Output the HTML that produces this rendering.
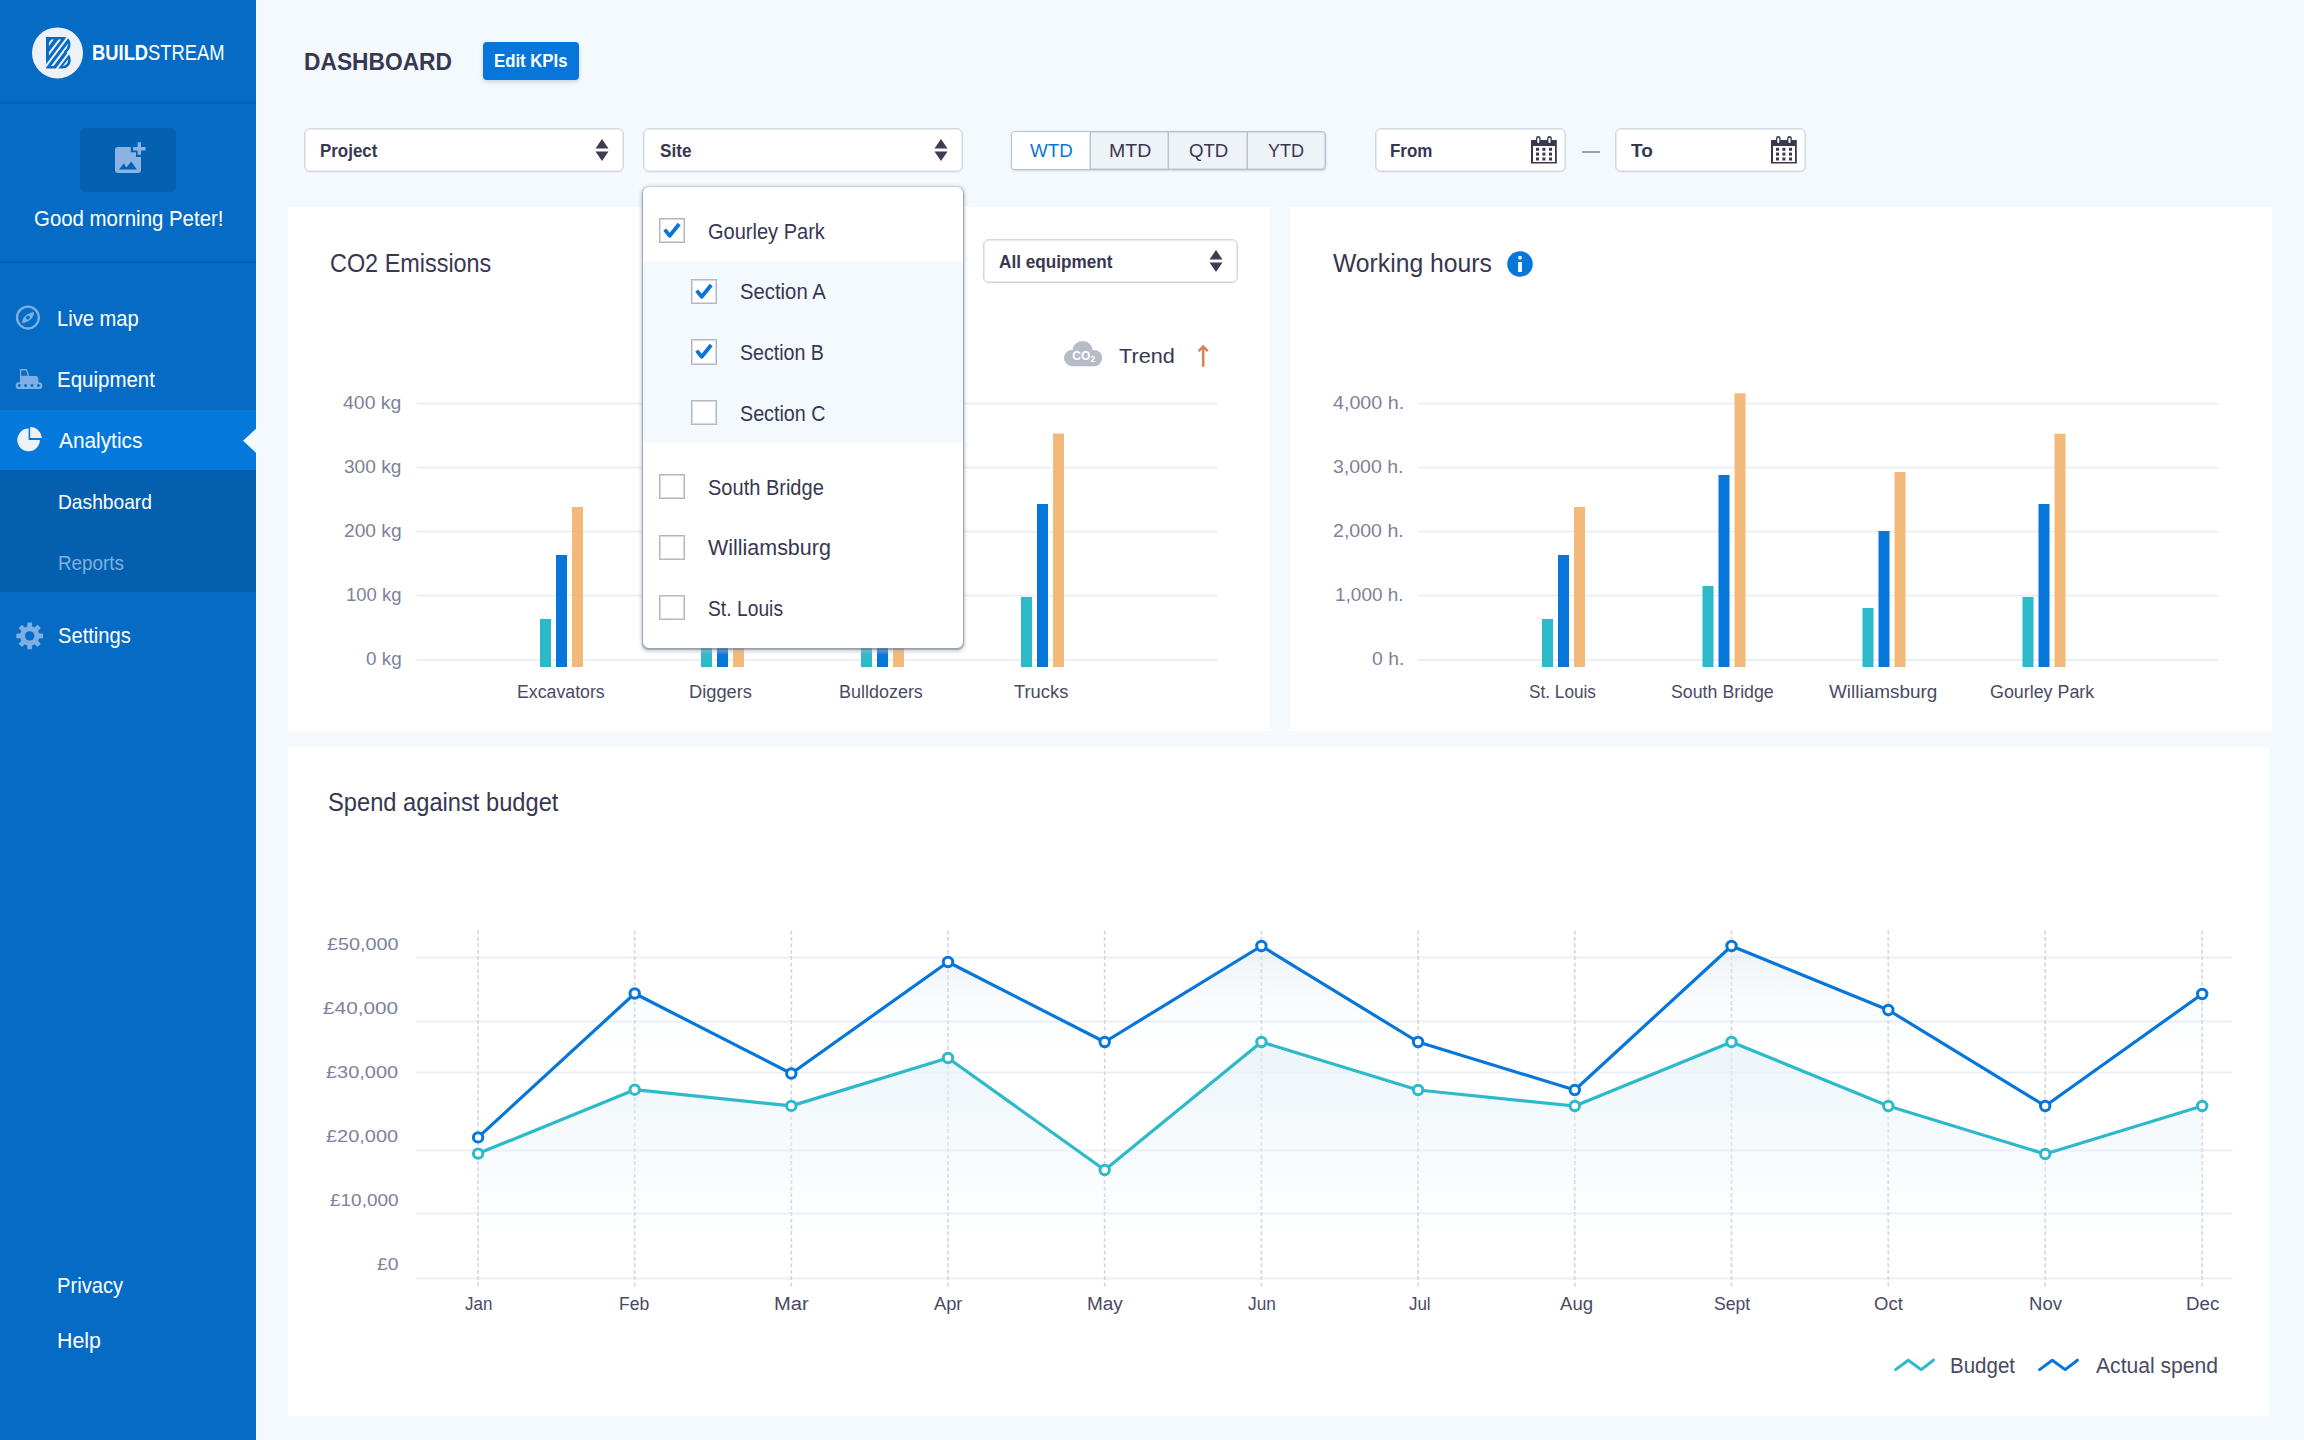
<!DOCTYPE html>
<html lang="en">
<head>
<meta charset="utf-8">
<title>Buildstream – Dashboard</title>
<style>
*{box-sizing:border-box}
html,body{margin:0;padding:0}
body{width:2304px;height:1440px;overflow:hidden;background:#f4f9fd;font-family:"Liberation Sans", sans-serif;position:relative}
.sidebar,.main{position:absolute;top:0;height:1440px}
.sidebar{left:0;width:256px;background:#056bc5}
.main{left:0;width:2304px}
.sidebar div,.main div,.abs,.t{position:absolute}
.abs{display:block;overflow:visible}
.t{white-space:nowrap;display:block;transform-origin:0 50%}
.t span{position:static}
h1,h2,ul,li,header,section{margin:0;padding:0;font:inherit;list-style:none}
.card{background:#fff}
.field{background:#fff;border:1px solid #d2d8df;border-radius:6px;box-shadow:inset 0 0 0 1px rgba(210,216,223,.5),0 1px 1px rgba(60,80,110,.06)}
.seg{background:#eef3f8;border:1px solid #bcc0cc;border-radius:4px;box-shadow:inset 0 0 0 1px rgba(188,192,204,.45),0 1px 2px rgba(60,80,110,.22)}
.dropdown{background:#fff;border-radius:6px;box-shadow:0 0 0 1px rgba(150,156,172,.3),0 1.5px 1.5px .5px rgba(60,62,88,.42),0 1.5px 3px 3px rgba(185,194,208,.4)}
.cb{background:#fff;border:1px solid #b3b6c4;box-shadow:inset 0 0 0 1px rgba(179,182,196,.5)}
</style>
</head>
<body>
<nav class="sidebar"><div style="left:0px;top:102px;width:256px;height:2px;background:#0462b6"></div><div style="left:0px;top:261px;width:256px;height:2px;background:#0462b6"></div><header class="brand"><svg class="abs" style="left:30px;top:25px" width="56" height="56" viewBox="30 25 56 56"><circle cx="57.5" cy="52.9" r="25.5" fill="#eef2f7"/><defs><clipPath id="bi"><path d="M48.9 39.6 H63.6 C66.4 39.6 67.8 42 67.8 44.6 C67.8 47.6 66.4 49.8 63.8 51.4 L65 52.8 C67 54.3 68 57 68 60 C68 63.6 65.6 66 62 66 H48.9 Z"/></clipPath></defs><path d="M46 37 H64 C68.6 37 70.5 40.8 70.5 44.6 C70.5 48 68.8 50.6 66.6 52.3 C69 53.8 70.7 56.8 70.7 60 C70.7 65 67 68.5 62 68.5 H46 Z" fill="#056bc5"/><g clip-path="url(#bi)" stroke="#eef2f7" fill="none"><path d="M30.40 68.82 L66.51 20.90" stroke-width="2.0"/><path d="M35.03 72.31 L71.14 24.39" stroke-width="2.1"/><path d="M43.02 78.33 L79.13 30.41" stroke-width="2.1"/><path d="M50.61 84.05 L86.71 36.13" stroke-width="2.2"/></g><g stroke="#eef2f7" fill="none"><path d="M44.36 68.07 L69.64 34.53" stroke-width="2.0"/><path d="M55.68 70.34 L74.93 44.78" stroke-width="2.0"/></g></svg><span class="t" style="left:91.95px;top:40px;font-size:22px;line-height:26px;color:#ffffff;transform:scaleX(0.8348);"><b>BUILD</b><span style="font-weight:400">STREAM</span></span></header><section class="profile"><div style="left:80px;top:128px;width:96px;height:64px;background:#0460b1;border-radius:6px"></div><svg class="abs" style="left:112px;top:140px" width="36" height="36" viewBox="112 140 36 36">
<path fill="#8ab3e3" d="M118 147 H130.8 V152.2 H136 V157 H141 V170 a3 3 0 0 1 -3 3 H118 a3 3 0 0 1 -3 -3 V150 a3 3 0 0 1 3 -3 Z M119 169.5 H136.9 L131.2 161.5 L126.4 167.5 L123.8 163.4 Z" fill-rule="evenodd"/>
<path fill="#8ab3e3" d="M137.6 142.2 h3.4 v4.9 h4.6 v3.3 h-4.6 v4.4 h-3.4 v-4.4 h-4.5 v-3.3 h4.5 Z"/>
</svg><span class="t" style="left:33.82px;top:206px;font-size:22px;line-height:26px;color:#ffffff;transform:scaleX(0.9277);">Good morning Peter!</span></section><ul class="menu"><div style="left:0px;top:410px;width:256px;height:60px;background:#0578dc"></div><div style="left:0px;top:470px;width:256px;height:122px;background:#0460af"></div><svg class="abs" style="left:240px;top:426px" width="16" height="30" viewBox="240 426 16 30"><path d="M256 428.8 L243 440.8 L256 452.8 Z" fill="#f4f9fd"/></svg><svg class="abs" style="left:12px;top:300px" width="36" height="36" viewBox="12 300 36 36">
<circle cx="27.9" cy="317.6" r="10.9" fill="none" stroke="#7dafe2" stroke-width="2.3"/>
<path fill="#7dafe2" fill-rule="evenodd" d="M34 312 C33.6 317.6 31.2 321.2 22 323.3 C22.6 317.4 25.2 313.9 34 312 Z M27.95 315.7 a1.9 1.9 0 1 0 0.01 0 Z"/>
</svg><svg class="abs" style="left:12px;top:364px" width="36" height="30" viewBox="12 364 36 30">
<path fill="#7dafe2" fill-rule="evenodd" d="M19.9 368.9 H26.9 L29.3 376.1 H36.6 L38.3 377.8 V382.3 H39 a3.3 3.3 0 0 1 0 6.7 H19 a3.3 3.3 0 0 1 0 -6.7 H19.9 Z
M21.2 370.4 V375.8 H27.9 L26 370.4 Z
M19.3 384 a1.5 1.5 0 1 0 0.01 0 Z M25.6 384 a1.5 1.5 0 1 0 0.01 0 Z M31.9 384 a1.5 1.5 0 1 0 0.01 0 Z M38.4 384 a1.5 1.5 0 1 0 0.01 0 Z"/>
</svg><svg class="abs" style="left:14px;top:424px" width="32" height="32" viewBox="14 424 32 32">
<path fill="#eef2f7" d="M28.6 428.6 A11.3 11.3 0 1 0 39.9 439.9 H28.6 Z"/>
<path fill="#eef2f7" d="M30.2 427.1 A11.4 11.4 0 0 1 41.7 438.1 H30.2 Z"/>
</svg><svg class="abs" style="left:12px;top:618px" width="36" height="36" viewBox="12 618 36 36"><circle cx="29.7" cy="635.9" r="9.6" fill="#7dafe2"/><path fill="#7dafe2" fill-rule="evenodd" d="M27.10 626.97 L27.45 622.49 L31.95 622.49 L32.30 626.97 L34.18 627.75 L37.59 624.82 L40.78 628.01 L37.85 631.42 L38.63 633.30 L43.11 633.65 L43.11 638.15 L38.63 638.50 L37.85 640.38 L40.78 643.79 L37.59 646.98 L34.18 644.05 L32.30 644.83 L31.95 649.31 L27.45 649.31 L27.10 644.83 L25.22 644.05 L21.81 646.98 L18.62 643.79 L21.55 640.38 L20.77 638.50 L16.29 638.15 L16.29 633.65 L20.77 633.30 L21.55 631.42 L18.62 628.01 L21.81 624.82 L25.22 627.75 Z M25.00 635.90 a4.7 4.7 0 1 0 9.4 0 a4.7 4.7 0 1 0 -9.4 0 Z"/><circle cx="29.7" cy="635.9" r="4.7" fill="#056bc5"/></svg><li class="t" style="left:57.46px;top:306px;font-size:21.5px;line-height:26px;color:#ffffff;transform:scaleX(0.9373);">Live map</li><li class="t" style="left:57.43px;top:367px;font-size:21.5px;line-height:26px;color:#ffffff;transform:scaleX(0.9525);">Equipment</li><li class="t" style="left:59.10px;top:428px;font-size:21.5px;line-height:26px;color:#ffffff;transform:scaleX(0.9689);">Analytics</li><li class="t" style="left:57.50px;top:489px;font-size:21px;line-height:25px;color:#ffffff;transform:scaleX(0.9143);">Dashboard</li><li class="t" style="left:57.53px;top:550px;font-size:21px;line-height:25px;color:#7fb0e0;transform:scaleX(0.8972);">Reports</li><li class="t" style="left:58.16px;top:623px;font-size:21.5px;line-height:26px;color:#ffffff;transform:scaleX(0.9368);">Settings</li></ul><ul class="meta"><li class="t" style="left:57.16px;top:1273px;font-size:21.5px;line-height:26px;color:#ffffff;transform:scaleX(0.9372);">Privacy</li><li class="t" style="left:57.06px;top:1328px;font-size:21.5px;line-height:26px;color:#ffffff;transform:scaleX(0.9928);">Help</li></ul></nav>
<main class="main"><header class="page-head"><h1 class="t" style="left:303.77px;top:47px;font-size:24.5px;line-height:29px;color:#383751;font-weight:700;transform:scaleX(0.9291);">DASHBOARD</h1><div class="btn" style="left:483px;top:42px;width:96px;height:38px;background:#0676db;border-radius:4px;box-shadow:0 2px 4px rgba(20,40,80,.18)"></div><span class="t" style="left:494.44px;top:50px;font-size:18px;line-height:22px;color:#ffffff;font-weight:700;transform:scaleX(0.9299);">Edit KPIs</span></header><section class="filters"><div class="field" style="left:304px;top:128px;width:320px;height:44px;"></div><span class="t" style="left:319.89px;top:139px;font-size:19px;line-height:23px;color:#383751;font-weight:700;transform:scaleX(0.8905);">Project</span><svg class="abs" style="left:593.6px;top:137.35px" width="16" height="26" viewBox="-8 -13 16 26"><path fill="#3f3c53" d="M0 -10.95 L6.5 -1.5 H-6.5 Z M0 10.95 L6.5 1.55 H-6.5 Z"/></svg><div class="field" style="left:643px;top:128px;width:320px;height:44px;"></div><span class="t" style="left:659.55px;top:139px;font-size:19px;line-height:23px;color:#383751;font-weight:700;transform:scaleX(0.9067);">Site</span><svg class="abs" style="left:932.7px;top:137.35px" width="16" height="26" viewBox="-8 -13 16 26"><path fill="#3f3c53" d="M0 -10.95 L6.5 -1.5 H-6.5 Z M0 10.95 L6.5 1.55 H-6.5 Z"/></svg><div class="seg" style="left:1011px;top:131px;width:315px;height:38.5px;"></div><div style="left:1012px;top:132px;width:78px;height:36.5px;background:#fff;border-radius:3px 0 0 3px"></div><div style="left:1090px;top:132px;width:1px;height:36.5px;background:#bcc0cc;box-shadow:-1px 0 0 rgba(188,192,204,.45)"></div><div style="left:1168px;top:132px;width:1px;height:36.5px;background:#bcc0cc;box-shadow:-1px 0 0 rgba(188,192,204,.45)"></div><div style="left:1247px;top:132px;width:1px;height:36.5px;background:#bcc0cc;box-shadow:-1px 0 0 rgba(188,192,204,.45)"></div><span class="t" style="left:1030.10px;top:139px;font-size:19px;line-height:23px;color:#0676db;transform:scaleX(0.9870);">WTD</span><span class="t" style="left:1109.06px;top:139px;font-size:19px;line-height:23px;color:#383751;transform:scaleX(1.0271);">MTD</span><span class="t" style="left:1188.97px;top:139px;font-size:19px;line-height:23px;color:#383751;transform:scaleX(0.9804);">QTD</span><span class="t" style="left:1268.37px;top:139px;font-size:19px;line-height:23px;color:#383751;transform:scaleX(0.9507);">YTD</span><div class="field" style="left:1375px;top:128px;width:191px;height:44px;"></div><span class="t" style="left:1390.38px;top:139px;font-size:19px;line-height:23px;color:#383751;font-weight:700;transform:scaleX(0.8933);">From</span><svg class="abs" style="left:1529px;top:134.2px" width="30" height="32" viewBox="-2 -6 30 32"><path fill="#3a3850" fill-rule="evenodd" d="M0 0 H25.8 V23.6 H0 Z M2 5.9 V22 H24 V5.9 Z"/><rect x="5.0" y="-4" width="4.6" height="8" rx="2.3" fill="#3a3850"/><rect x="6.3" y="-2.3" width="2" height="5.4" rx="1" fill="#fff"/><rect x="16.2" y="-4" width="4.6" height="8" rx="2.3" fill="#3a3850"/><rect x="17.5" y="-2.3" width="2" height="5.4" rx="1" fill="#fff"/><rect x="5.0" y="7.800000000000001" width="3" height="3" fill="#3a3850"/><rect x="5.0" y="12.6" width="3" height="3" fill="#3a3850"/><rect x="5.0" y="17.5" width="3" height="3" fill="#3a3850"/><rect x="11.4" y="7.800000000000001" width="3" height="3" fill="#3a3850"/><rect x="11.4" y="12.6" width="3" height="3" fill="#3a3850"/><rect x="11.4" y="17.5" width="3" height="3" fill="#3a3850"/><rect x="18.0" y="7.800000000000001" width="3" height="3" fill="#3a3850"/><rect x="18.0" y="12.6" width="3" height="3" fill="#3a3850"/><rect x="18.0" y="17.5" width="3" height="3" fill="#3a3850"/></svg><div style="left:1582px;top:150.5px;width:18px;height:2px;background:#9d9fae"></div><div class="field" style="left:1615px;top:128px;width:191px;height:44px;"></div><span class="t" style="left:1630.95px;top:139px;font-size:19px;line-height:23px;color:#383751;font-weight:700;transform:scaleX(1.0024);">To</span><svg class="abs" style="left:1769px;top:134.2px" width="30" height="32" viewBox="-2 -6 30 32"><path fill="#3a3850" fill-rule="evenodd" d="M0 0 H25.8 V23.6 H0 Z M2 5.9 V22 H24 V5.9 Z"/><rect x="5.0" y="-4" width="4.6" height="8" rx="2.3" fill="#3a3850"/><rect x="6.3" y="-2.3" width="2" height="5.4" rx="1" fill="#fff"/><rect x="16.2" y="-4" width="4.6" height="8" rx="2.3" fill="#3a3850"/><rect x="17.5" y="-2.3" width="2" height="5.4" rx="1" fill="#fff"/><rect x="5.0" y="7.800000000000001" width="3" height="3" fill="#3a3850"/><rect x="5.0" y="12.6" width="3" height="3" fill="#3a3850"/><rect x="5.0" y="17.5" width="3" height="3" fill="#3a3850"/><rect x="11.4" y="7.800000000000001" width="3" height="3" fill="#3a3850"/><rect x="11.4" y="12.6" width="3" height="3" fill="#3a3850"/><rect x="11.4" y="17.5" width="3" height="3" fill="#3a3850"/><rect x="18.0" y="7.800000000000001" width="3" height="3" fill="#3a3850"/><rect x="18.0" y="12.6" width="3" height="3" fill="#3a3850"/><rect x="18.0" y="17.5" width="3" height="3" fill="#3a3850"/></svg></section><section class="cards"><div class="card" style="left:288px;top:207px;width:982px;height:524px;"></div><div class="card" style="left:1290px;top:207px;width:982px;height:524px;"></div><div class="card" style="left:288px;top:747px;width:1981px;height:669px;"></div><h2 class="t" style="left:329.83px;top:248px;font-size:25px;line-height:30px;color:#383751;transform:scaleX(0.9365);">CO2 Emissions</h2><h2 class="t" style="left:1332.75px;top:248px;font-size:25px;line-height:30px;color:#383751;transform:scaleX(0.9881);">Working hours</h2><h2 class="t" style="left:328.12px;top:787px;font-size:25px;line-height:30px;color:#383751;transform:scaleX(0.9473);">Spend against budget</h2><svg class="abs" style="left:1505px;top:249px" width="30" height="30" viewBox="1505 249 30 30">
<circle cx="1520" cy="264" r="12.8" fill="#0676db"/>
<circle cx="1520" cy="257.7" r="1.85" fill="#fff"/>
<rect x="1518.1" y="262" width="3.8" height="10" fill="#fff"/>
</svg><div class="field" style="left:983px;top:239px;width:255px;height:44px;"></div><span class="t" style="left:999.05px;top:250px;font-size:19px;line-height:23px;color:#383751;font-weight:700;transform:scaleX(0.9024);">All equipment</span><svg class="abs" style="left:1208.2px;top:247.8px" width="16" height="26" viewBox="-8 -13 16 26"><path fill="#3f3c53" d="M0 -10.95 L6.5 -1.5 H-6.5 Z M0 10.95 L6.5 1.55 H-6.5 Z"/></svg><svg class="abs" style="left:1060px;top:338px" width="46" height="32" viewBox="1060 338 46 32">
<g fill="#b7bbc7"><circle cx="1072.3" cy="358" r="8.3"/><circle cx="1082.6" cy="351.3" r="10.3"/><circle cx="1094" cy="358.1" r="8.2"/><rect x="1072.3" y="352" width="21.7" height="14.3"/></g>
<text x="1072.3" y="360.2" font-family="Liberation Sans, sans-serif" font-size="12.4" font-weight="700" fill="#fff" textLength="18" lengthAdjust="spacingAndGlyphs">CO</text>
<text x="1090.4" y="362.4" font-family="Liberation Sans, sans-serif" font-size="8.6" font-weight="700" fill="#fff">2</text>
</svg><span class="t" style="left:1119.18px;top:343px;font-size:21px;line-height:25px;color:#383751;transform:scaleX(1.0316);">Trend</span><svg class="abs" style="left:1194px;top:341px" width="20" height="30" viewBox="1194 341 20 30">
<path d="M1203.2 347 V366.7 M1198.6 351.2 L1203.2 346.6 L1207.8 351.2" fill="none" stroke="#d8835a" stroke-width="2.6" stroke-linejoin="miter"/>
</svg><svg class="abs" style="left:256px;top:0" width="2048" height="1440" viewBox="256 0 2048 1440"><rect x="416.5" y="402.70000000000005" width="801" height="1.8" fill="#e8eef5"/><rect x="1418" y="402.70000000000005" width="801" height="1.8" fill="#e8eef5"/><rect x="416.5" y="466.70000000000005" width="801" height="1.8" fill="#e8eef5"/><rect x="1418" y="466.70000000000005" width="801" height="1.8" fill="#e8eef5"/><rect x="416.5" y="530.7" width="801" height="1.8" fill="#e8eef5"/><rect x="1418" y="530.7" width="801" height="1.8" fill="#e8eef5"/><rect x="416.5" y="594.7" width="801" height="1.8" fill="#e8eef5"/><rect x="1418" y="594.7" width="801" height="1.8" fill="#e8eef5"/><rect x="416.5" y="659.0" width="801" height="1.8" fill="#e8eef5"/><rect x="1418" y="659.0" width="801" height="1.8" fill="#e8eef5"/><rect x="540" y="619" width="11" height="48" fill="#2cb9c9"/><rect x="556" y="555" width="11" height="112" fill="#0676db"/><rect x="572" y="507" width="11" height="160" fill="#f3b97a"/><rect x="701" y="586" width="11" height="81" fill="#2cb9c9"/><rect x="717" y="475" width="11" height="192" fill="#0676db"/><rect x="733" y="393" width="11" height="274" fill="#f3b97a"/><rect x="861" y="608" width="11" height="59" fill="#2cb9c9"/><rect x="877" y="531" width="11" height="136" fill="#0676db"/><rect x="893" y="472" width="11" height="195" fill="#f3b97a"/><rect x="1021" y="597" width="11" height="70" fill="#2cb9c9"/><rect x="1037" y="504" width="11" height="163" fill="#0676db"/><rect x="1053" y="433.5" width="11" height="233.5" fill="#f3b97a"/><rect x="1542" y="619" width="11" height="48" fill="#2cb9c9"/><rect x="1558" y="555" width="11" height="112" fill="#0676db"/><rect x="1574" y="507" width="11" height="160" fill="#f3b97a"/><rect x="1702.5" y="586" width="11" height="81" fill="#2cb9c9"/><rect x="1718.5" y="475" width="11" height="192" fill="#0676db"/><rect x="1734.5" y="393.3" width="11" height="273.7" fill="#f3b97a"/><rect x="1862.5" y="608" width="11" height="59" fill="#2cb9c9"/><rect x="1878.5" y="531" width="11" height="136" fill="#0676db"/><rect x="1894.5" y="472" width="11" height="195" fill="#f3b97a"/><rect x="2022.5" y="597" width="11" height="70" fill="#2cb9c9"/><rect x="2038.5" y="504" width="11" height="163" fill="#0676db"/><rect x="2054.5" y="433.8" width="11" height="233.2" fill="#f3b97a"/><defs><linearGradient id="g1" gradientUnits="userSpaceOnUse" x1="0" y1="946" x2="0" y2="1060"><stop offset="0" stop-color="#dde8f0" stop-opacity=".55"/><stop offset=".45" stop-color="#e6eff5" stop-opacity=".26"/><stop offset="1" stop-color="#edf4f9" stop-opacity="0"/></linearGradient><linearGradient id="g2" gradientUnits="userSpaceOnUse" x1="0" y1="1042" x2="0" y2="1250"><stop offset="0" stop-color="#e4f0f7" stop-opacity=".7"/><stop offset=".5" stop-color="#eaf3f9" stop-opacity=".42"/><stop offset="1" stop-color="#f0f7fb" stop-opacity="0"/></linearGradient></defs><rect x="416" y="956.6" width="1816" height="1.8" fill="#e8eef5"/><rect x="416" y="1020.6" width="1816" height="1.8" fill="#e8eef5"/><rect x="416" y="1071.6" width="1816" height="1.8" fill="#e8eef5"/><rect x="416" y="1149.6" width="1816" height="1.8" fill="#e8eef5"/><rect x="416" y="1212.6" width="1816" height="1.8" fill="#e8eef5"/><rect x="416" y="1277.6" width="1816" height="1.8" fill="#e8eef5"/><path d="M478.1 930.5 V1287" stroke="#d5dae3" stroke-width="1.8" stroke-dasharray="4 2.4" fill="none"/><path d="M634.7 930.5 V1287" stroke="#d5dae3" stroke-width="1.8" stroke-dasharray="4 2.4" fill="none"/><path d="M791.3 930.5 V1287" stroke="#d5dae3" stroke-width="1.8" stroke-dasharray="4 2.4" fill="none"/><path d="M948 930.5 V1287" stroke="#d5dae3" stroke-width="1.8" stroke-dasharray="4 2.4" fill="none"/><path d="M1104.7 930.5 V1287" stroke="#d5dae3" stroke-width="1.8" stroke-dasharray="4 2.4" fill="none"/><path d="M1261.4 930.5 V1287" stroke="#d5dae3" stroke-width="1.8" stroke-dasharray="4 2.4" fill="none"/><path d="M1418.1 930.5 V1287" stroke="#d5dae3" stroke-width="1.8" stroke-dasharray="4 2.4" fill="none"/><path d="M1574.8 930.5 V1287" stroke="#d5dae3" stroke-width="1.8" stroke-dasharray="4 2.4" fill="none"/><path d="M1731.5 930.5 V1287" stroke="#d5dae3" stroke-width="1.8" stroke-dasharray="4 2.4" fill="none"/><path d="M1888.3 930.5 V1287" stroke="#d5dae3" stroke-width="1.8" stroke-dasharray="4 2.4" fill="none"/><path d="M2045.2 930.5 V1287" stroke="#d5dae3" stroke-width="1.8" stroke-dasharray="4 2.4" fill="none"/><path d="M2202.2 930.5 V1287" stroke="#d5dae3" stroke-width="1.8" stroke-dasharray="4 2.4" fill="none"/><polygon points="478.1,1137.4 634.7,993.5 791.3,1073.5 948,962 1104.7,1042 1261.4,946 1418.1,1042 1574.8,1090 1731.5,946 1888.3,1010 2045.2,1106 2202.2,994 2202.2,1262 478.1,1262" fill="url(#g1)"/><polygon points="478.1,1153.6 634.7,1089.7 791.3,1105.9 948,1058 1104.7,1170 1261.4,1042 1418.1,1090 1574.8,1106 1731.5,1042 1888.3,1106 2045.2,1154 2202.2,1106 2202.2,1262 478.1,1262" fill="url(#g2)"/><polyline points="478.1,1153.6 634.7,1089.7 791.3,1105.9 948,1058 1104.7,1170 1261.4,1042 1418.1,1090 1574.8,1106 1731.5,1042 1888.3,1106 2045.2,1154 2202.2,1106" fill="none" stroke="#2cb9c9" stroke-width="3.2" stroke-linejoin="round"/><polyline points="478.1,1137.4 634.7,993.5 791.3,1073.5 948,962 1104.7,1042 1261.4,946 1418.1,1042 1574.8,1090 1731.5,946 1888.3,1010 2045.2,1106 2202.2,994" fill="none" stroke="#0676db" stroke-width="3.2" stroke-linejoin="round"/><circle cx="478.1" cy="1153.6" r="4.7" fill="#fff" stroke="#2cb9c9" stroke-width="3"/><circle cx="634.7" cy="1089.7" r="4.7" fill="#fff" stroke="#2cb9c9" stroke-width="3"/><circle cx="791.3" cy="1105.9" r="4.7" fill="#fff" stroke="#2cb9c9" stroke-width="3"/><circle cx="948" cy="1058" r="4.7" fill="#fff" stroke="#2cb9c9" stroke-width="3"/><circle cx="1104.7" cy="1170" r="4.7" fill="#fff" stroke="#2cb9c9" stroke-width="3"/><circle cx="1261.4" cy="1042" r="4.7" fill="#fff" stroke="#2cb9c9" stroke-width="3"/><circle cx="1418.1" cy="1090" r="4.7" fill="#fff" stroke="#2cb9c9" stroke-width="3"/><circle cx="1574.8" cy="1106" r="4.7" fill="#fff" stroke="#2cb9c9" stroke-width="3"/><circle cx="1731.5" cy="1042" r="4.7" fill="#fff" stroke="#2cb9c9" stroke-width="3"/><circle cx="1888.3" cy="1106" r="4.7" fill="#fff" stroke="#2cb9c9" stroke-width="3"/><circle cx="2045.2" cy="1154" r="4.7" fill="#fff" stroke="#2cb9c9" stroke-width="3"/><circle cx="2202.2" cy="1106" r="4.7" fill="#fff" stroke="#2cb9c9" stroke-width="3"/><circle cx="478.1" cy="1137.4" r="4.7" fill="#fff" stroke="#0676db" stroke-width="3"/><circle cx="634.7" cy="993.5" r="4.7" fill="#fff" stroke="#0676db" stroke-width="3"/><circle cx="791.3" cy="1073.5" r="4.7" fill="#fff" stroke="#0676db" stroke-width="3"/><circle cx="948" cy="962" r="4.7" fill="#fff" stroke="#0676db" stroke-width="3"/><circle cx="1104.7" cy="1042" r="4.7" fill="#fff" stroke="#0676db" stroke-width="3"/><circle cx="1261.4" cy="946" r="4.7" fill="#fff" stroke="#0676db" stroke-width="3"/><circle cx="1418.1" cy="1042" r="4.7" fill="#fff" stroke="#0676db" stroke-width="3"/><circle cx="1574.8" cy="1090" r="4.7" fill="#fff" stroke="#0676db" stroke-width="3"/><circle cx="1731.5" cy="946" r="4.7" fill="#fff" stroke="#0676db" stroke-width="3"/><circle cx="1888.3" cy="1010" r="4.7" fill="#fff" stroke="#0676db" stroke-width="3"/><circle cx="2045.2" cy="1106" r="4.7" fill="#fff" stroke="#0676db" stroke-width="3"/><circle cx="2202.2" cy="994" r="4.7" fill="#fff" stroke="#0676db" stroke-width="3"/><path d="M1895.6 1369.6 L1908.3 1360.2 L1921.2 1369.6 L1933.4 1360.2" fill="none" stroke="#2cb9c9" stroke-width="3" stroke-linecap="round" stroke-linejoin="round"/><path d="M2039.6 1369.6 L2052.3 1360.2 L2065.2 1369.6 L2077.4 1360.2" fill="none" stroke="#0676db" stroke-width="3" stroke-linecap="round" stroke-linejoin="round"/></svg><span class="t" style="left:343.27px;top:392px;font-size:18.5px;line-height:22px;color:#7d8298;transform:scaleX(1.0512);">400 kg</span><span class="t" style="left:344.33px;top:456px;font-size:18.5px;line-height:22px;color:#7d8298;transform:scaleX(1.0318);">300 kg</span><span class="t" style="left:344.06px;top:520px;font-size:18.5px;line-height:22px;color:#7d8298;transform:scaleX(1.0366);">200 kg</span><span class="t" style="left:346.00px;top:584px;font-size:18.5px;line-height:22px;color:#7d8298;">100 kg</span><span class="t" style="left:365.94px;top:648px;font-size:18.5px;line-height:22px;color:#7d8298;transform:scaleX(1.0182);">0 kg</span><span class="t" style="left:516.87px;top:681px;font-size:18px;line-height:22px;color:#4a4a63;transform:scaleX(0.9851);">Excavators</span><span class="t" style="left:688.83px;top:681px;font-size:18px;line-height:22px;color:#4a4a63;transform:scaleX(1.0159);">Diggers</span><span class="t" style="left:838.50px;top:681px;font-size:18px;line-height:22px;color:#4a4a63;transform:scaleX(0.9976);">Bulldozers</span><span class="t" style="left:1013.79px;top:681px;font-size:18px;line-height:22px;color:#4a4a63;transform:scaleX(1.0182);">Trucks</span><span class="t" style="left:1332.67px;top:392px;font-size:18.5px;line-height:22px;color:#7d8298;transform:scaleX(1.0641);">4,000 h.</span><span class="t" style="left:1333.31px;top:456px;font-size:18.5px;line-height:22px;color:#7d8298;transform:scaleX(1.0543);">3,000 h.</span><span class="t" style="left:1333.04px;top:520px;font-size:18.5px;line-height:22px;color:#7d8298;transform:scaleX(1.0584);">2,000 h.</span><span class="t" style="left:1335.16px;top:584px;font-size:18.5px;line-height:22px;color:#7d8298;transform:scaleX(1.0259);">1,000 h.</span><span class="t" style="left:1371.52px;top:648px;font-size:18.5px;line-height:22px;color:#7d8298;transform:scaleX(1.0456);">0 h.</span><span class="t" style="left:1528.83px;top:681px;font-size:18px;line-height:22px;color:#4a4a63;transform:scaleX(0.9556);">St. Louis</span><span class="t" style="left:1670.86px;top:681px;font-size:18px;line-height:22px;color:#4a4a63;transform:scaleX(0.9873);">South Bridge</span><span class="t" style="left:1829.29px;top:681px;font-size:18px;line-height:22px;color:#4a4a63;transform:scaleX(1.0512);">Williamsburg</span><span class="t" style="left:1989.61px;top:681px;font-size:18px;line-height:22px;color:#4a4a63;transform:scaleX(0.9923);">Gourley Park</span><span class="t" style="left:326.82px;top:935px;font-size:17px;line-height:20px;color:#7d8298;transform:scaleX(1.1651);">£50,000</span><span class="t" style="left:323.29px;top:999px;font-size:17px;line-height:20px;color:#7d8298;transform:scaleX(1.2232);">£40,000</span><span class="t" style="left:326.31px;top:1063px;font-size:17px;line-height:20px;color:#7d8298;transform:scaleX(1.1734);">£30,000</span><span class="t" style="left:326.31px;top:1127px;font-size:17px;line-height:20px;color:#7d8298;transform:scaleX(1.1734);">£20,000</span><span class="t" style="left:329.84px;top:1191px;font-size:17px;line-height:20px;color:#7d8298;transform:scaleX(1.1154);">£10,000</span><span class="t" style="left:376.83px;top:1255px;font-size:17px;line-height:20px;color:#7d8298;transform:scaleX(1.1380);">£0</span><span class="t" style="left:464.86px;top:1293px;font-size:18px;line-height:22px;color:#4a4a63;transform:scaleX(0.9418);">Jan</span><span class="t" style="left:619.34px;top:1293px;font-size:18px;line-height:22px;color:#4a4a63;transform:scaleX(0.9739);">Feb</span><span class="t" style="left:773.77px;top:1293px;font-size:18px;line-height:22px;color:#4a4a63;transform:scaleX(1.1179);">Mar</span><span class="t" style="left:934.15px;top:1293px;font-size:18px;line-height:22px;color:#4a4a63;transform:scaleX(1.0162);">Apr</span><span class="t" style="left:1086.77px;top:1293px;font-size:18px;line-height:22px;color:#4a4a63;transform:scaleX(1.0523);">May</span><span class="t" style="left:1248.26px;top:1293px;font-size:18px;line-height:22px;color:#4a4a63;transform:scaleX(0.9600);">Jun</span><span class="t" style="left:1408.92px;top:1293px;font-size:18px;line-height:22px;color:#4a4a63;transform:scaleX(0.9395);">Jul</span><span class="t" style="left:1559.90px;top:1293px;font-size:18px;line-height:22px;color:#4a4a63;transform:scaleX(1.0309);">Aug</span><span class="t" style="left:1713.77px;top:1293px;font-size:18px;line-height:22px;color:#4a4a63;transform:scaleX(0.9793);">Sept</span><span class="t" style="left:1874.23px;top:1293px;font-size:18px;line-height:22px;color:#4a4a63;transform:scaleX(1.0275);">Oct</span><span class="t" style="left:2028.96px;top:1293px;font-size:18px;line-height:22px;color:#4a4a63;transform:scaleX(1.0295);">Nov</span><span class="t" style="left:2185.84px;top:1293px;font-size:18px;line-height:22px;color:#4a4a63;transform:scaleX(1.0400);">Dec</span><span class="t" style="left:1950.23px;top:1353px;font-size:21.5px;line-height:26px;color:#4a4a63;transform:scaleX(0.9540);">Budget</span><span class="t" style="left:2096.10px;top:1353px;font-size:21.5px;line-height:26px;color:#4a4a63;transform:scaleX(0.9821);">Actual spend</span></section><ul class="site-options"><div class="dropdown" style="left:643px;top:187px;width:320px;height:461px;"></div><div style="left:643px;top:261px;width:320px;height:182px;background:#f4f9fd"></div><li><div class="cb" style="left:659.4px;top:217.8px;width:25.4px;height:25.2px;"><svg class="abs" style="left:0;top:0" width="25" height="25" viewBox="0 0 25 25"><path d="M4.7 10.6 L9.7 16.8 L19.2 5" fill="none" stroke="#0676db" stroke-width="3.8" stroke-linecap="butt" stroke-linejoin="round"/></svg></div><span class="t" style="left:707.69px;top:219px;font-size:22px;line-height:26px;color:#383751;transform:scaleX(0.9100);">Gourley Park</span></li><li><div class="cb" style="left:691.4px;top:278.6px;width:25.4px;height:25.2px;"><svg class="abs" style="left:0;top:0" width="25" height="25" viewBox="0 0 25 25"><path d="M4.7 10.6 L9.7 16.8 L19.2 5" fill="none" stroke="#0676db" stroke-width="3.8" stroke-linecap="butt" stroke-linejoin="round"/></svg></div><span class="t" style="left:739.68px;top:279px;font-size:22px;line-height:26px;color:#383751;transform:scaleX(0.9221);">Section A</span></li><li><div class="cb" style="left:691.4px;top:339.4px;width:25.4px;height:25.2px;"><svg class="abs" style="left:0;top:0" width="25" height="25" viewBox="0 0 25 25"><path d="M4.7 10.6 L9.7 16.8 L19.2 5" fill="none" stroke="#0676db" stroke-width="3.8" stroke-linecap="butt" stroke-linejoin="round"/></svg></div><span class="t" style="left:739.71px;top:340px;font-size:22px;line-height:26px;color:#383751;transform:scaleX(0.8913);">Section B</span></li><li><div class="cb" style="left:691.4px;top:400.3px;width:25.4px;height:25.2px;"></div><span class="t" style="left:739.70px;top:401px;font-size:22px;line-height:26px;color:#383751;transform:scaleX(0.8963);">Section C</span></li><li><div class="cb" style="left:659.4px;top:473.8px;width:25.4px;height:25.2px;"></div><span class="t" style="left:707.69px;top:475px;font-size:22px;line-height:26px;color:#383751;transform:scaleX(0.9102);">South Bridge</span></li><li><div class="cb" style="left:659.4px;top:534.6px;width:25.4px;height:25.2px;"></div><span class="t" style="left:708.36px;top:535px;font-size:22px;line-height:26px;color:#383751;transform:scaleX(0.9755);">Williamsburg</span></li><li><div class="cb" style="left:659.4px;top:595.3px;width:25.4px;height:25.2px;"></div><span class="t" style="left:707.72px;top:596px;font-size:22px;line-height:26px;color:#383751;transform:scaleX(0.8764);">St. Louis</span></li></ul></main>
</body>
</html>
